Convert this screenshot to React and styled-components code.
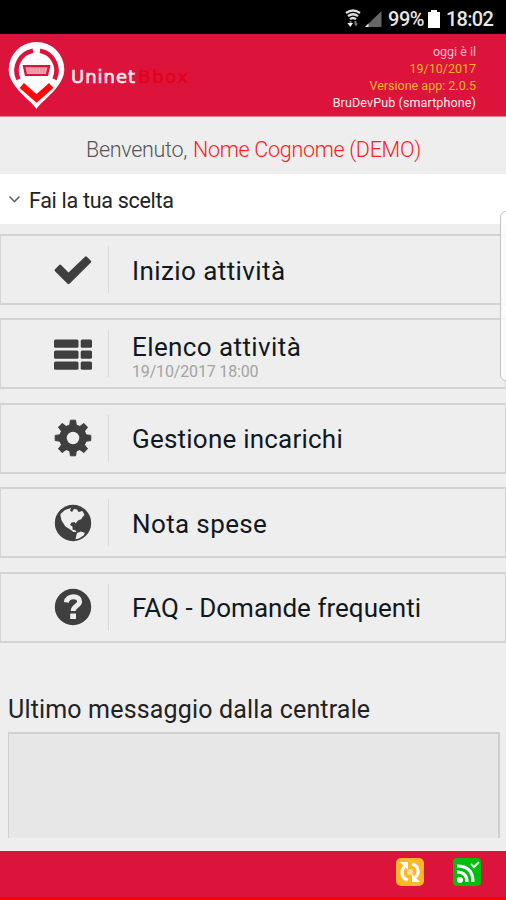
import React from "react";
import styled, { createGlobalStyle } from "styled-components";

const Global = createGlobalStyle`
  * { box-sizing: border-box; }
  html, body { margin: 0; padding: 0; }
  body { font-family: Roboto, "Liberation Sans", sans-serif; background: #eee; color: #111820; }
  svg { display: block; flex: none; }
`;
const Screen = styled.div`
  position: relative; width: 506px; height: 900px; overflow: hidden;
  display: flex; flex-direction: column; background: #eeeeee;
`;
const StatusBar = styled.div`
  height: 34px; flex: none; background: #000; color: #e6e6e6;
  display: flex; align-items: center; justify-content: flex-end;
  padding: 3px 13px 0 0; font-size: 20px; white-space: nowrap;
`;
const StatusText = styled.span`
  font-weight: 500; line-height: 24px; letter-spacing: ${(p) => p.$spacing}px;
  margin: 0 ${(p) => p.$after || 0}px 0 6px;
`;
const Header = styled.header`
  height: 83px; flex: none; background: #dc143c; display: flex;
  justify-content: space-between; border-bottom: 1px solid #e57a90;
`;
const Brand = styled.div`
  display: flex; align-items: flex-start; gap: 6px; padding: 7px 0 0 7px;
`;
const Info = styled.div`
  padding: 9px 30px 0 0; text-align: right; font-size: 12.5px; line-height: 17px; white-space: nowrap;
`;
const InfoLine = styled.div`
  color: ${(p) => p.$color}; letter-spacing: ${(p) => p.$spacing || 0}px;
`;
const Welcome = styled.div`
  height: 57px; flex: none; padding: 4px 0 0 1px; text-align: center;
  font-size: 21.5px; line-height: 57px; font-weight: 300; color: #555; letter-spacing: -0.29px;
  white-space: nowrap;
`;
const UserName = styled.span`color: #fa2020; margin-left: 1px;`;
const Choice = styled.div`
  height: 50px; flex: none; background: #fff; display: flex; align-items: center;
  padding: 2px 0 0 8px; gap: 8px; font-size: 21.5px; letter-spacing: -0.3px; color: #222;
`;
const Menu = styled.nav`
  flex: none; display: flex; flex-direction: column; gap: 13.4px; padding-top: 10px;
`;
const MenuRow = styled.div`
  height: 71px; border: 2px solid #d3d3d3; border-left-width: 1px; border-right-width: 1px;
  background: #eee; display: flex; align-items: center;
`;
const IconCell = styled.div`
  width: 108px; height: 47px; border-right: 1px solid #d9d9d9; display: flex;
  align-items: center; padding-left: 51px; color: #3f3f3f;
`;
const RowText = styled.div`padding: ${(p) => p.$top}px 0 0 23px; white-space: nowrap;`;
const RowTitle = styled.div`
  font-size: 26px; line-height: 30px; letter-spacing: ${(p) => p.$spacing}px;
`;
const RowDate = styled.div`
  color: #a3a3a3; font-size: 16px; line-height: 18px; margin-top: 1px; letter-spacing: -0.16px;
`;
const MessageTitle = styled.h2`
  margin: 51px 0 0 8px; font-size: 25px; line-height: 31px; font-weight: 400;
  color: #222; letter-spacing: 0.17px; white-space: nowrap;
`;
const MessageBox = styled.div`
  height: 106px; margin: 7px 6px 0 8px; flex: none; background: #e7e7e7;
  border: 2px solid #d0d0d0; border-left-width: 1px; border-bottom: 0;
`;
const Footer = styled.footer`
  height: 49px; flex: none; margin-top: auto; background: #dc143c; border-bottom: 3px solid #ff0000;
  display: flex; justify-content: flex-end; padding: 7px 25px 0 0; gap: 29px;
`;
const EdgePanel = styled.div`
  position: absolute; top: 211px; right: -6px; width: 12px; height: 170px;
  background: rgba(255,255,255,.8); border: 1px solid #c4c4c4; border-radius: 7px;
`;
const Wordmark = styled.div`
  margin-top: 25px; font-family: "DejaVu Sans", sans-serif; font-size: 18px;
  line-height: 22px; color: #f8eaea; letter-spacing: 1px; white-space: nowrap;
  -webkit-text-stroke: 0.6px currentColor;
`;
const WordmarkAccent = styled.span`color: #e3031a; margin-left: 2px; letter-spacing: 1.7px;`;

const teeth = Array.from({ length: 8 }, (_, i) => i * 45);

function RowIcon({ kind }) {
  return (
    <svg width="42" height="42" viewBox="0 0 42 42" fill="currentColor">
      {kind === "check" && (
        <path d="M3 22.2q-.9-1 0-1.9l4.200-4.200q1-1 1.900 0l7.400 7.300L33 7.700q1-.9 1.900 0l4 4q.9 1 0 1.900L17.500 34.800q-1 .9-1.900 0z" />
      )}
      {kind === "list" && [6.5, 17.5, 28.5].map((y) => (
        <g key={y}><rect x="2" y={y} width="24.5" height="8.3" rx="1.5" /><rect x="28.7" y={y} width="11.3" height="8.3" rx="1.5" /></g>
      ))}
      {kind === "gear" && (
        <g>
          {teeth.map((a) => <path key={a} d="M17.500 10L18.400 3.200h5.200L24.500 10z" stroke="currentColor" strokeLinejoin="round" transform={`rotate(${a} 21 21)`} />)}
          <circle cx="21" cy="21" r="10" fill="none" stroke="currentColor" strokeWidth="7.5" />
        </g>
      )}
      {kind === "globe" && (
        <g>
          <circle cx="21" cy="21" r="18.2" />
          <path fill="#eee" d="M8.500 12l4.500-4 6-2-1 2.500 2 1.500 2-3 3 .5 1.500 2.500 4-1 2 4-2 2-1 2-3.500 1.500-2.500 3-1-1.500-3 .5-1.500 2.500 2.500 1.500 0 3 3 1 1 1.500-3 0-4-3-4-2.500-4-6-1-5z" />
          <path fill="#eee" d="M25 31l4-1.500 4 1.500-1.500 2.500-4.500 3-3.500.8z" />
        </g>
      )}
      {kind === "question" && (
        <g>
          <circle cx="21" cy="21" r="18.2" />
          <path d="M14.300 16.300C15.500 8.700 27.600 9.200 27.600 15.500c0 4.400-6.400 4.100-6.400 9.500" fill="none" stroke="#eee" strokeWidth="5" />
          <rect x="18.2" y="27.5" width="5.8" height="5.5" rx=".6" fill="#eee" />
        </g>
      )}
    </svg>
  );
}

function Logo() {
  return (
    <svg width="58" height="69" viewBox="0 0 58 69">
      <path d="M29.500 68C24 59 1.700 46 1.700 28.500a27.800 27.500 0 0 1 55.600 0C57.300 46 35 59 29.500 68z" fill="#fff" />
      <path d="M26 9.800A20 20 0 0 0 11.500 38.300M33 9.800A20 20 0 0 1 47.500 38.300" fill="none" stroke="#dc143c" strokeWidth="4.6" />
      <path d="M15.500 24h28l-2.500 11h-23z" fill="#dc143c" />
      <path d="M18.500 26.300h22l-1.600 6.600H20z" fill="#eda5af" />
      <path d="M22 27v5M25 27v5M28 27v5M31 27v5M34 27v5M37 27v5" stroke="#d98794" strokeWidth=".8" />
      <path d="M14.800 44.500L29.500 57.500l14.700-13" fill="none" stroke="#ff0808" strokeWidth="6.5" />
    </svg>
  );
}

const rows = [
  { kind: "check", title: "Inizio attività", spacing: 0.42 },
  { kind: "list", title: "Elenco attività", spacing: 0.4, date: "19/10/2017 18:00" },
  { kind: "gear", title: "Gestione incarichi", spacing: 0.22 },
  { kind: "globe", title: "Nota spese", spacing: 0.38 },
  { kind: "question", title: "FAQ - Domande frequenti", spacing: 0.02 },
];

export default function App() {
  return (
    <>
      <Global />
      <Screen>
        <StatusBar>
          <svg width="40" height="20" viewBox="0 0 40 20" fill="none">
            <g transform="translate(3 0)">
              <path d="M1 4q7-5 14 0M3 7.200q5-4 10 0M5 10.200q3-2.500 6 0" stroke="#ddd" strokeWidth="2.3" />
              <path d="M5.500 12v3M10.500 12v3" stroke="#777" strokeWidth="2" />
              <path d="M2.500 14h5.500l-2.700 4z" fill="#fff" /><path d="M9 14.500h4l-2 3z" fill="#777" />
            </g>
            <path d="M23 18L39.500 2v16z" fill="#666" /><path d="M23 18l3.500-3.500v3.500z" fill="#eee" />
          </svg>
          <StatusText $spacing={-0.5} $after={4}>99%</StatusText>
          <svg width="12" height="18" viewBox="0 0 12 18"><path d="M0 2h3V0h6v2h3v16H0z" fill="#fff" /></svg>
          <StatusText $spacing={-0.75}>18:02</StatusText>
        </StatusBar>
        <Header>
          <Brand>
            <Logo />
            <Wordmark>Uninet<WordmarkAccent>Bbox</WordmarkAccent></Wordmark>
          </Brand>
          <Info>
            <InfoLine $color="#f6bcc6">oggi è il</InfoLine>
            <InfoLine $color="#ffb52b">19/10/2017</InfoLine>
            <InfoLine $color="#ffb52b">Versione app: 2.0.5</InfoLine>
            <InfoLine $color="#ffe9ec" $spacing={0.12}>BruDevPub (smartphone)</InfoLine>
          </Info>
        </Header>
        <Welcome>Benvenuto, <UserName>Nome Cognome (DEMO)</UserName></Welcome>
        <Choice>
          <svg width="13" height="10" viewBox="0 0 13 10"><path d="M1.500 1.500l5 5 5-5" fill="none" stroke="#666" strokeWidth="1.6" /></svg>
          <span>Fai la tua scelta</span>
        </Choice>
        <Menu>
          {rows.map((r) => (
            <MenuRow key={r.kind}>
              <IconCell><RowIcon kind={r.kind} /></IconCell>
              <RowText $top={r.date ? 5 : 2}>
                <RowTitle $spacing={r.spacing}>{r.title}</RowTitle>
                {r.date && <RowDate>{r.date}</RowDate>}
              </RowText>
            </MenuRow>
          ))}
        </Menu>
        <MessageTitle>Ultimo messaggio dalla centrale</MessageTitle>
        <MessageBox />
        <Footer>
          <svg width="28" height="28" viewBox="0 0 28 28">
            <rect width="28" height="28" rx="5" fill="#fdb824" />
            <path d="M12 22C4.500 20 4.500 12 9 8.500M16 6c7.500 2 7.500 10 3 13.500" fill="none" stroke="#fff" strokeWidth="3.2" />
            <path d="M4 4h8v8zM24 24h-8v-8z" fill="#fff" /><circle cx="14" cy="14" r="3" fill="#ffe1a0" />
          </svg>
          <svg width="28" height="28" viewBox="0 0 28 28">
            <rect width="28" height="28" rx="4" fill="#00bd10" />
            <circle cx="7" cy="22" r="3" fill="#fff" />
            <path d="M4 14q10 0 10 10M4 8q16 0 16 16" fill="none" stroke="#fff" strokeWidth="3.2" />
            <path d="M18 6l3 3 5-5" fill="none" stroke="#d9ffd9" strokeWidth="2" />
          </svg>
        </Footer>
        <EdgePanel />
      </Screen>
    </>
  );
}
